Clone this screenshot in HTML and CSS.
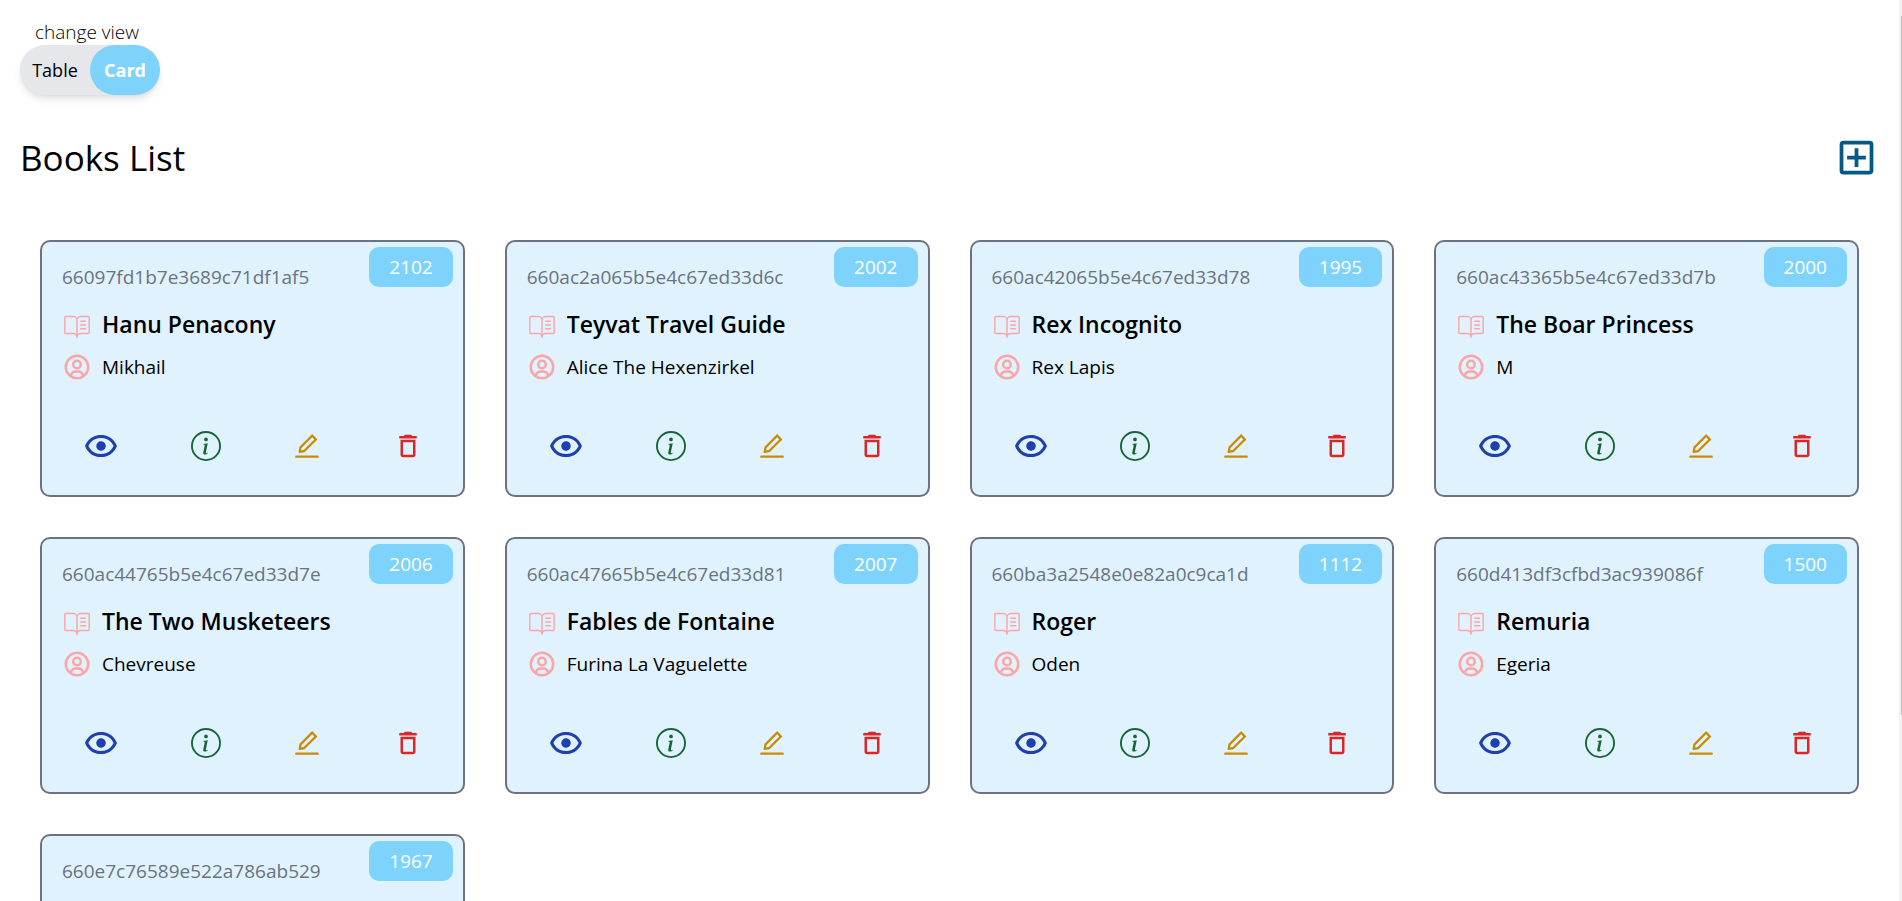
FILE: index.html
```html
<!DOCTYPE html>
<html lang="en">
<head>
<meta charset="utf-8">
<meta name="viewport" content="width=device-width, initial-scale=1">
<title>Books List</title>
<link rel="stylesheet" href="styles.css">
</head>
<body>
<svg class="sprite" aria-hidden="true">
  <symbol id="i-book" viewBox="0 0 256 256">
    <path fill="none" stroke="currentColor" stroke-width="12" stroke-linecap="round" stroke-linejoin="round" d="M128 88a32 32 0 0 1 32-32h64a8 8 0 0 1 8 8v128a8 8 0 0 1-8 8h-64a32 32 0 0 0-32 32M128 88a32 32 0 0 0-32-32H32a8 8 0 0 0-8 8v128a8 8 0 0 0 8 8h64a32 32 0 0 1 32 32V88M160 96h40M160 128h40M160 160h40"/>
  </symbol>
  <symbol id="i-user" viewBox="0 0 24 24">
    <path d="M12 2A10.13 10.13 0 0 0 2 12a10 10 0 0 0 4 7.92V20h.1a9.7 9.7 0 0 0 11.8 0h.1v-.08A10 10 0 0 0 22 12 10.13 10.13 0 0 0 12 2zM8.07 18.93A3 3 0 0 1 11 16.57h2a3 3 0 0 1 2.93 2.36 7.75 7.75 0 0 1-7.86 0zm9.54-1.29A5 5 0 0 0 13 14.57h-2a5 5 0 0 0-4.61 3.07A8 8 0 0 1 4 12a8.1 8.1 0 0 1 8-8 8.1 8.1 0 0 1 8 8 8 8 0 0 1-2.39 5.64z"/>
    <path d="M12 6a3.91 3.91 0 0 0-4 4 3.91 3.91 0 0 0 4 4 3.91 3.91 0 0 0 4-4 3.91 3.91 0 0 0-4-4zm0 6a1.91 1.91 0 0 1-2-2 1.91 1.91 0 0 1 2-2 1.91 1.91 0 0 1 2 2 1.91 1.91 0 0 1-2 2z"/>
  </symbol>
  <symbol id="i-show" viewBox="0 0 24 24">
    <path d="M12 9a3.02 3.02 0 0 0-3 3c0 1.642 1.358 3 3 3 1.641 0 3-1.358 3-3 0-1.641-1.359-3-3-3z"/>
    <path d="M12 5c-7.633 0-9.927 6.617-9.948 6.684L1.946 12l.105.316C2.073 12.383 4.367 19 12 19s9.927-6.617 9.948-6.684l.106-.316-.105-.316C21.927 11.617 19.633 5 12 5zm0 12c-5.351 0-7.424-3.846-7.926-5C4.578 10.842 6.652 7 12 7c5.351 0 7.424 3.846 7.926 5-.504 1.158-2.578 5-7.926 5z"/>
  </symbol>
  <symbol id="i-info" viewBox="0 0 16 16">
    <path d="M8 15A7 7 0 1 1 8 1a7 7 0 0 1 0 14zm0 1A8 8 0 1 0 8 0a8 8 0 0 0 0 16z"/>
    <path d="m8.93 6.588-2.29.287-.082.38.45.083c.294.07.352.176.288.469l-.738 3.468c-.194.897.105 1.319.808 1.319.545 0 1.178-.252 1.465-.598l.088-.416c-.2.176-.492.246-.686.246-.275 0-.375-.193-.304-.533L8.93 6.588zM9 4.5a1 1 0 1 1-2 0 1 1 0 0 1 2 0z"/>
  </symbol>
  <symbol id="i-edit" viewBox="0 0 1024 1024">
    <path d="M257.7 752c2 0 4-.2 6-.5L431.9 722c2-.4 3.9-1.3 5.3-2.8l423.9-423.9a9.96 9.96 0 0 0 0-14.1L694.9 114.9c-1.9-1.9-4.4-2.9-7.1-2.9s-5.2 1-7.1 2.9L256.8 538.8c-1.5 1.5-2.4 3.3-2.8 5.3l-29.5 168.2a33.5 33.5 0 0 0 9.4 29.8c6.6 6.4 14.9 9.9 23.8 9.9zm67.4-174.4L687.8 215l73.3 73.3-362.7 362.6-88.9 15.7 15.6-89zM880 836H144c-17.7 0-32 14.3-32 32v36c0 4.4 3.6 8 8 8h784c4.4 0 8-3.6 8-8v-36c0-17.7-14.3-32-32-32z"/>
  </symbol>
  <symbol id="i-delete" viewBox="0 0 24 24">
    <path d="M16 9v10H8V9h8m-1.5-6h-5l-1 1H5v2h14V4h-3.5l-1-1zM18 7H6v12c0 1.1.9 2 2 2h8c1.1 0 2-.9 2-2V7z"/>
  </symbol>
  <symbol id="i-add" viewBox="0 0 24 24">
    <path d="M19 3H5a2 2 0 0 0-2 2v14a2 2 0 0 0 2 2h14c1.1 0 2-.9 2-2V5a2 2 0 0 0-2-2zm0 16H5V5h14v14zm-8-2h2v-4h4v-2h-4V7h-2v4H7v2h4v4z"/>
  </symbol>
</svg>
<main class="page">
  <div class="view">
    <span class="view-label" id="view-label">change view</span>
    <div class="toggle" role="group" aria-labelledby="view-label">
      <button class="toggle-btn" type="button" aria-pressed="false">Table</button>
      <button class="toggle-btn active" type="button" aria-pressed="true">Card</button>
    </div>
  </div>
  <header class="head">
    <h1 class="title">Books List</h1>
    <a class="add" href="#create" aria-label="Add book"><svg class="icon-lg"><use href="#i-add"/></svg></a>
  </header>
  <section class="grid" id="books"></section>
</main>
<div class="rail" aria-hidden="true"><div class="thumb"></div></div>
<script src="script.js"></script>
</body>
</html>
```
FILE: styles.css
```css
* { box-sizing: border-box; margin: 0; }

body {
  font-family: "Segoe UI", "Open Sans", "Noto Sans", sans-serif;
  font-size: 19px;
  line-height: 30px;
  color: #000;
  background: #fff;
}

svg { display: block; fill: currentColor; }
.sprite { position: absolute; width: 0; height: 0; }

.page { padding: 20px 23px 20px 20px; }

.view {
  display: flex;
  flex-direction: column;
  width: fit-content;
}
.view-label {
  padding-left: 15px;
  font-weight: 300;
  line-height: 25px;
}
.toggle {
  display: flex;
  width: 140px;
  height: 50px;
  border-radius: 25px;
  background: #e5e7eb;
  box-shadow: 0 5px 8px -1px rgb(0 0 0 / 0.1), 0 2px 5px -2px rgb(0 0 0 / 0.1);
}
.toggle-btn {
  flex: 1;
  padding: 0;
  border: 0;
  border-radius: 25px;
  background: none;
  color: #000;
  font: inherit;
  font-size: 18px;
}
.toggle-btn.active {
  background: #7dd3fc;
  color: #fff;
  font-weight: 700;
}

.head {
  display: flex;
  justify-content: space-between;
  align-items: center;
  margin-top: 40px;
}
.title {
  font-size: 35px;
  font-weight: 400;
  line-height: 45px;
}
.add { color: #075985; }
.icon-lg { width: 45px; height: 45px; }

.grid {
  display: grid;
  grid-template-columns: repeat(4, 1fr);
  gap: 40px;
  padding: 60px 20px 20px;
}
.card {
  position: relative;
  padding: 10px 20px;
  border: 2px solid #6b7280;
  border-radius: 10px;
  background: #e0f2fe;
}
.year {
  position: absolute;
  top: 5px;
  right: 10px;
  padding: 5px 20px;
  border-radius: 10px;
  background: #7dd3fc;
  color: #fff;
}
.book-id {
  margin: 10px 0 15px;
  color: #6b7280;
}
.row {
  display: flex;
  align-items: center;
  gap: 10px;
}
.row + .row { margin-top: 10px; }
.row .icon { color: #fca5a5; }
.name {
  font-size: 23px;
  font-weight: 600;
  line-height: 35px;
}
.icon { width: 30px; height: 30px; flex: none; }
.actions {
  display: flex;
  justify-content: space-between;
  align-items: center;
  margin-top: 25px;
  padding: 20px;
}
.act {
  padding: 0;
  border: 0;
  background: none;
}
.icon-eye { width: 38px; height: 38px; }
.show { color: #1e40af; }
.info { color: #166534; }
.edit { color: #ca8a04; }
.delete { color: #dc2626; }

.rail {
  position: fixed;
  top: 0;
  right: 0;
  bottom: 0;
  width: 3px;
  padding: 16px 0 0 2px;
  background: #f1f1f1;
}
.thumb { height: 79%; background: #c1c1c1; }
```
FILE: script.js
```js
const books = [
  ["66097fd1b7e3689c71df1af5", "2102", "Hanu Penacony", "Mikhail"],
  ["660ac2a065b5e4c67ed33d6c", "2002", "Teyvat Travel Guide", "Alice The Hexenzirkel"],
  ["660ac42065b5e4c67ed33d78", "1995", "Rex Incognito", "Rex Lapis"],
  ["660ac43365b5e4c67ed33d7b", "2000", "The Boar Princess", "M"],
  ["660ac44765b5e4c67ed33d7e", "2006", "The Two Musketeers", "Chevreuse"],
  ["660ac47665b5e4c67ed33d81", "2007", "Fables de Fontaine", "Furina La Vaguelette"],
  ["660ba3a2548e0e82a0c9ca1d", "1112", "Roger", "Oden"],
  ["660d413df3cfbd3ac939086f", "1500", "Remuria", "Egeria"],
  ["660e7c76589e522a786ab529", "1967", "", ""]
];

document.getElementById("books").innerHTML = books.map(([id, year, name, author]) => `
  <article class="card">
    <span class="year">${year}</span>
    <p class="book-id">${id}</p>
    <div class="row"><svg class="icon"><use href="#i-book"/></svg><h2 class="name">${name}</h2></div>
    <div class="row"><svg class="icon"><use href="#i-user"/></svg><p>${author}</p></div>
    <div class="actions">
      <button class="act show" type="button" aria-label="Preview"><svg class="icon-eye"><use href="#i-show"/></svg></button>
      <a class="act info" href="#details-${id}" aria-label="Details"><svg class="icon"><use href="#i-info"/></svg></a>
      <a class="act edit" href="#edit-${id}" aria-label="Edit"><svg class="icon"><use href="#i-edit"/></svg></a>
      <a class="act delete" href="#delete-${id}" aria-label="Delete"><svg class="icon"><use href="#i-delete"/></svg></a>
    </div>
  </article>`).join("");
```
